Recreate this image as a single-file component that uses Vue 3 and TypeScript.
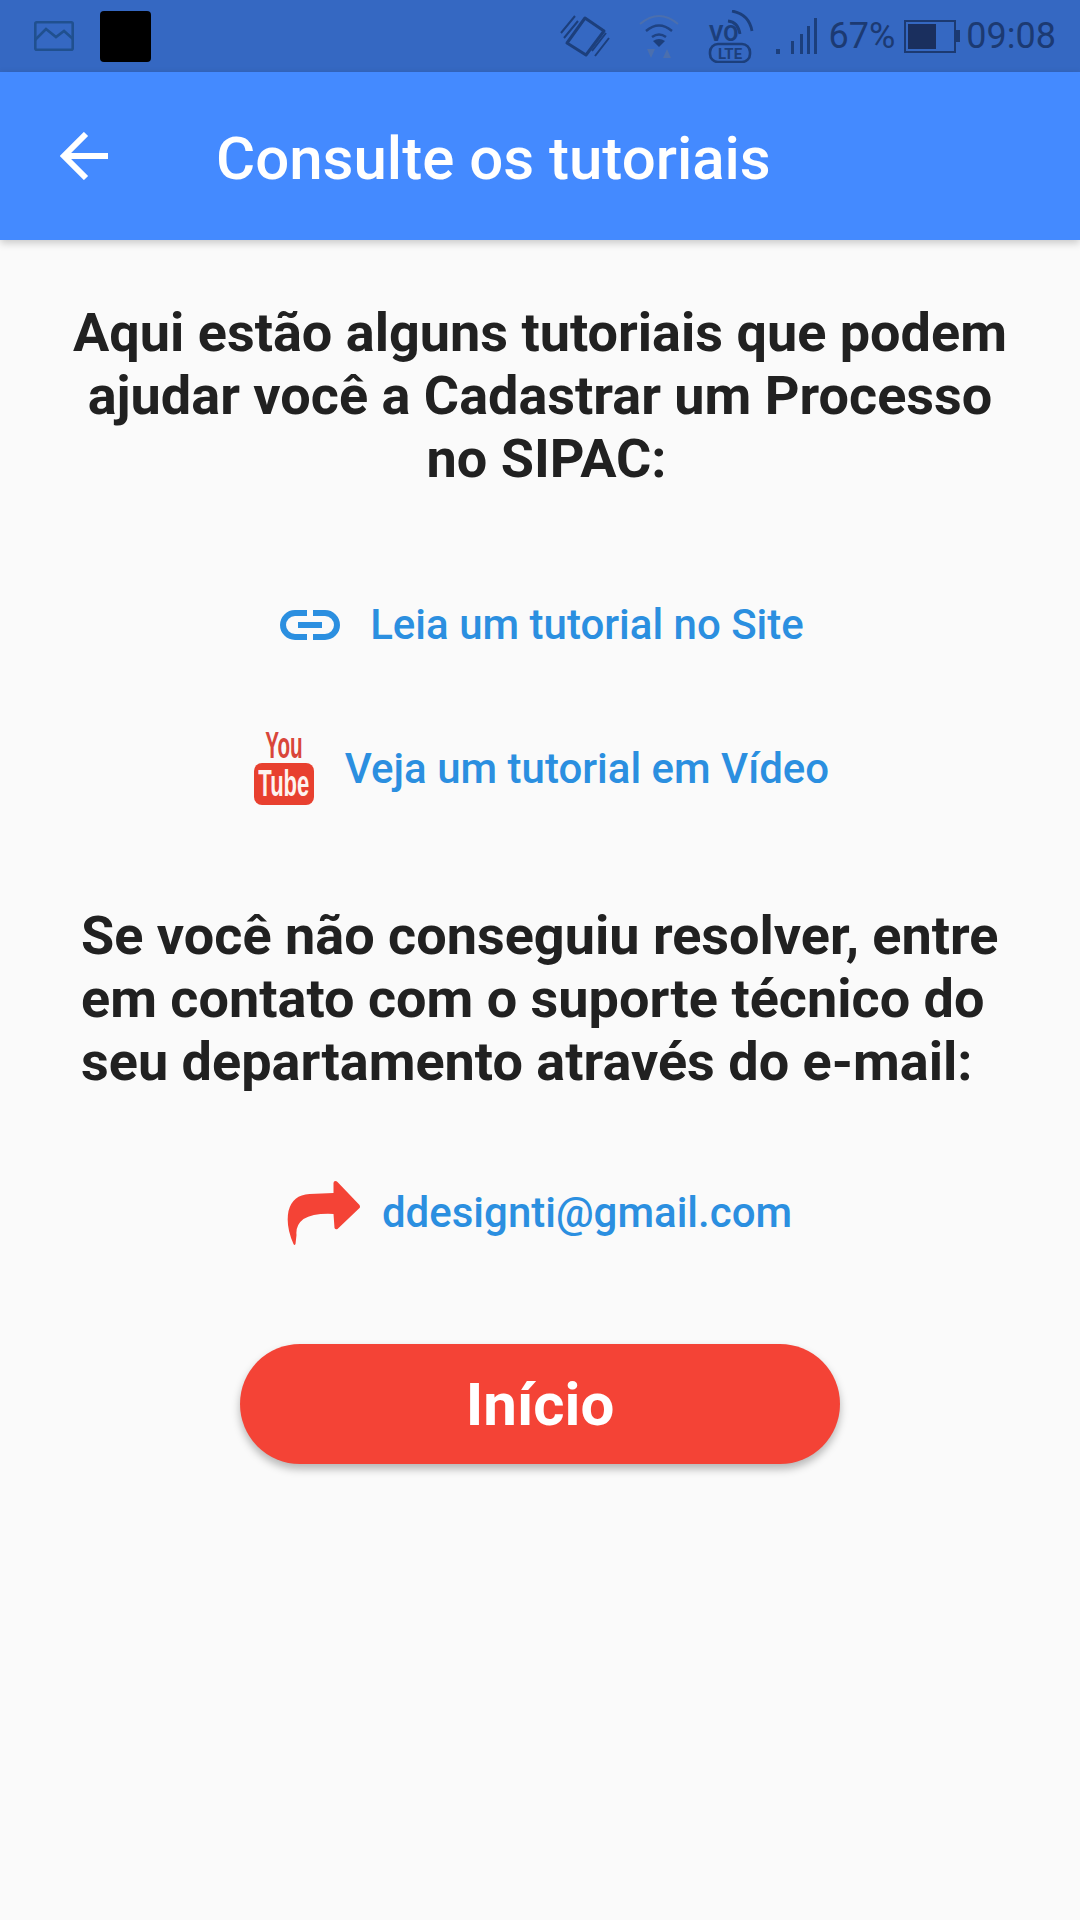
<script setup lang="ts">
const introLines = [
  "Aqui estão alguns tutoriais que podem",
  "ajudar você a Cadastrar um Processo",
];
const supportLines = [
  "Se você não conseguiu resolver, entre",
  "em contato com o suporte técnico do",
  "seu departamento através do e-mail:",
];
</script>

<template>
  <div class="screen">
    <div class="status-bar">
      <div class="status-left">
        <svg class="st-image" viewBox="0 0 40 30" fill="none" stroke="#20508f" stroke-width="2.6">
          <rect x="1.3" y="1.3" width="37.4" height="27.4" rx="1.5" />
          <path d="M1 19 L12 8 L22 16 L30 10 L39 18" />
        </svg>
        <div class="black-square"></div>
      </div>
      <div class="status-right">
        <svg class="st-vibrate" viewBox="0 0 50 44" fill="none" stroke="#1c3f7c">
          <path d="M25 4 L44 17 L26 41 L7 29 Z" stroke-width="3" stroke-linejoin="round" />
          <path d="M1 19 L15 2 M4 24 L18 7 M49 24 L35 42 M46 19 L32 37" stroke-width="2" />
        </svg>
        <svg class="st-wifi" viewBox="0 0 40 44">
          <path d="M1 10 Q20 -6 39 10" fill="none" stroke="#4b6fae" stroke-width="2" />
          <path d="M7 17 Q20 6 33 17" fill="none" stroke="#1f4384" stroke-width="2.4" />
          <path d="M13 23 Q20 18 27 23" fill="none" stroke="#1f4384" stroke-width="2.4" />
          <path d="M14 27 Q20 23 26 27 L20 33 Z" fill="#1c3f7c" />
          <path d="M8 35 H16 L12 44 Z M24 44 L28 35 L32 44 Z" fill="#4b6fae" />
        </svg>
        <div class="st-volte">
          <svg viewBox="0 0 46 53" fill="none" stroke="#1c3f7c">
            <path d="M20 11 Q30 12 32 24 M24 1 Q41 4 44 21" stroke-width="2.8" />
            <text x="1" y="31" class="vo-text">VO</text>
            <rect x="2" y="34" width="40" height="18" rx="8" stroke-width="2.6" />
            <text x="22" y="48.5" text-anchor="middle" class="lte-text">LTE</text>
          </svg>
        </div>
        <svg class="st-signal" viewBox="0 0 41 37" fill="#1c3f7c">
          <rect x="0" y="31" width="4" height="5" />
          <rect x="15" y="23" width="3" height="13" />
          <rect x="24" y="16" width="3" height="20" />
          <rect x="31" y="8" width="3" height="28" />
          <rect x="38" y="0" width="3" height="36" />
        </svg>
        <span class="st-text pct">67%</span>
        <div class="battery">
          <div class="battery-body"><div class="battery-fill"></div></div>
          <div class="battery-tip"></div>
        </div>
        <span class="st-text time">09:08</span>
      </div>
    </div>

    <header class="app-bar">
      <svg class="back-arrow" viewBox="0 0 50 48" fill="none" stroke="#fff" stroke-width="6">
        <path d="M48 24 H5" />
        <path d="M26 2 L4 24 L26 46" />
      </svg>
      <h1 class="app-title">Consulte os tutoriais</h1>
    </header>

    <main class="content">
      <h2 class="intro">
        <span v-for="line in introLines" :key="line" class="intro-line">{{ line }}</span>
        <span class="intro-line intro-last">no SIPAC:</span>
      </h2>

      <a class="link-row link-site">
        <svg class="icon-link" viewBox="0 0 60 30" fill="none" stroke="#2b8fe0" stroke-width="6">
          <path d="M27 3 H15 A12 12 0 0 0 15 27 H27" />
          <path d="M33 3 H45 A12 12 0 0 1 45 27 H33" />
          <path d="M18 15 H42" />
        </svg>
        <span>Leia um tutorial no Site</span>
      </a>

      <a class="link-row link-video">
        <div class="icon-youtube">
          <div class="yt-you"><span>You</span></div>
          <div class="yt-tube"><span>Tube</span></div>
        </div>
        <span>Veja um tutorial em Vídeo</span>
      </a>

      <div class="support">
        <h2 v-for="line in supportLines" :key="line" class="support-line">{{ line }}</h2>
      </div>

      <a class="link-row link-mail">
        <svg class="icon-share" viewBox="0 0 72 64">
          <path
            d="M48 0 Q49 0 50 1 L72 24 Q73 26 72 27 L50 48 Q48 49 47 47 L46 33 Q26 32 16 38 Q8 44 9 54 L8 63 Q7 65 6 63 Q-2 45 1 30 Q5 14 22 13 L46 12 L46 2 Q46 0 48 0 Z"
            fill="#f44336"
          />
        </svg>
        <span>ddesignti@gmail.com</span>
      </a>

      <button class="start-button">Início</button>
    </main>
  </div>
</template>

<style>
html,
body {
  margin: 0;
  background: #fafafa;
}
</style>

<style scoped>
.screen {
  width: 1080px;
  height: 1920px;
  background: #fafafa;
  overflow: hidden;
  font-family: Roboto, "Liberation Sans", sans-serif;
  display: flex;
  flex-direction: column;
}

.status-bar {
  height: 72px;
  background: #3568c2;
  display: flex;
  justify-content: space-between;
  align-items: center;
  flex-shrink: 0;
}

.status-left {
  display: flex;
  align-items: center;
  padding-left: 34px;
  gap: 26px;
}

.st-image {
  width: 40px;
  height: 30px;
}

.black-square {
  width: 51px;
  height: 51px;
  border-radius: 4px;
  background: #000;
}

.status-right {
  display: flex;
  align-items: center;
  padding-right: 24px;
}

.st-vibrate {
  width: 50px;
  height: 44px;
  margin-right: 29px;
}

.st-wifi {
  width: 40px;
  height: 44px;
  margin-right: 29px;
}

.st-volte {
  width: 46px;
  height: 53px;
  margin-right: 22px;
}

.st-volte svg {
  display: block;
  width: 46px;
  height: 53px;
}

.vo-text {
  font: 700 22px Roboto, sans-serif;
  fill: #1c3f7c;
  stroke: none;
}

.lte-text {
  font: 700 15px Roboto, sans-serif;
  fill: #1c3f7c;
  stroke: none;
}

.st-signal {
  width: 41px;
  height: 37px;
  margin-right: 12px;
}

.st-text {
  color: #1c3a72;
  font-size: 36px;
  line-height: 44px;
}

.battery {
  display: flex;
  align-items: center;
  margin-left: 9px;
  margin-right: 6px;
}

.battery-body {
  width: 44px;
  height: 25px;
  border: 2px solid #1c3a72;
  padding: 2px;
  display: flex;
}

.battery-fill {
  width: 28px;
  background: #1a2f5e;
}

.battery-tip {
  width: 4px;
  height: 12px;
  background: #1c3a72;
}

.app-bar {
  height: 168px;
  background: #448aff;
  display: flex;
  align-items: center;
  padding-left: 60px;
  box-shadow: 0 3px 8px rgba(0, 0, 0, 0.2);
  flex-shrink: 0;
  position: relative;
}

.back-arrow {
  width: 50px;
  height: 48px;
  margin-top: -1px;
  margin-right: 106px;
}

.app-title {
  margin: 5px 0 0;
  color: #fff;
  font-size: 60px;
  font-weight: 500;
  line-height: 64px;
}

.content {
  display: flex;
  flex-direction: column;
  align-items: center;
}

.intro {
  margin: 61px 0 0;
  width: 960px;
  text-align: center;
  color: #212121;
  font-size: 54px;
  font-weight: 700;
  line-height: 63px;
}

.intro-line {
  display: block;
}

.intro-last {
  padding-left: 13px;
}

.link-row {
  display: flex;
  align-items: center;
  justify-content: center;
  color: #2b8fe0;
  font-size: 42px;
  font-weight: 500;
  line-height: 50px;
}

.link-site {
  margin-top: 110px;
  margin-left: 4px;
  gap: 30px;
}

.icon-link {
  width: 60px;
  height: 30px;
}

.link-video {
  margin-top: 83px;
  margin-left: 3px;
  gap: 31px;
}

.icon-youtube {
  width: 60px;
  height: 72px;
  display: flex;
  flex-direction: column;
  align-items: center;
}

.yt-you {
  height: 30px;
  box-sizing: border-box;
  padding-top: 5px;
  font: 700 22px/16px "Liberation Sans", sans-serif;
  color: #d9463a;
}

.yt-you span {
  display: block;
  transform: scale(0.94, 1.7);
}

.yt-tube {
  width: 60px;
  height: 42px;
  box-sizing: border-box;
  padding-top: 13px;
  border-radius: 8px;
  background: #e8402f;
  text-align: center;
  font: 700 22px/16px "Liberation Sans", sans-serif;
  color: #fdf3f0;
}

.yt-tube span {
  display: block;
  transform: scale(1, 1.7);
}

.support {
  margin-top: 99px;
  width: 918px;
}

.support-line {
  margin: 0;
  color: #212121;
  font-size: 54px;
  font-weight: 700;
  line-height: 63px;
  white-space: nowrap;
}

.link-mail {
  margin-top: 88px;
  margin-left: -1px;
  gap: 22px;
}

.icon-share {
  width: 73px;
  height: 64px;
}

.start-button {
  margin-top: 99px;
  width: 600px;
  height: 120px;
  border: none;
  border-radius: 60px;
  background: #f44336;
  color: #fff;
  font-family: inherit;
  font-size: 60px;
  font-weight: 700;
  box-shadow: 0 5px 8px rgba(0, 0, 0, 0.28);
}
</style>
